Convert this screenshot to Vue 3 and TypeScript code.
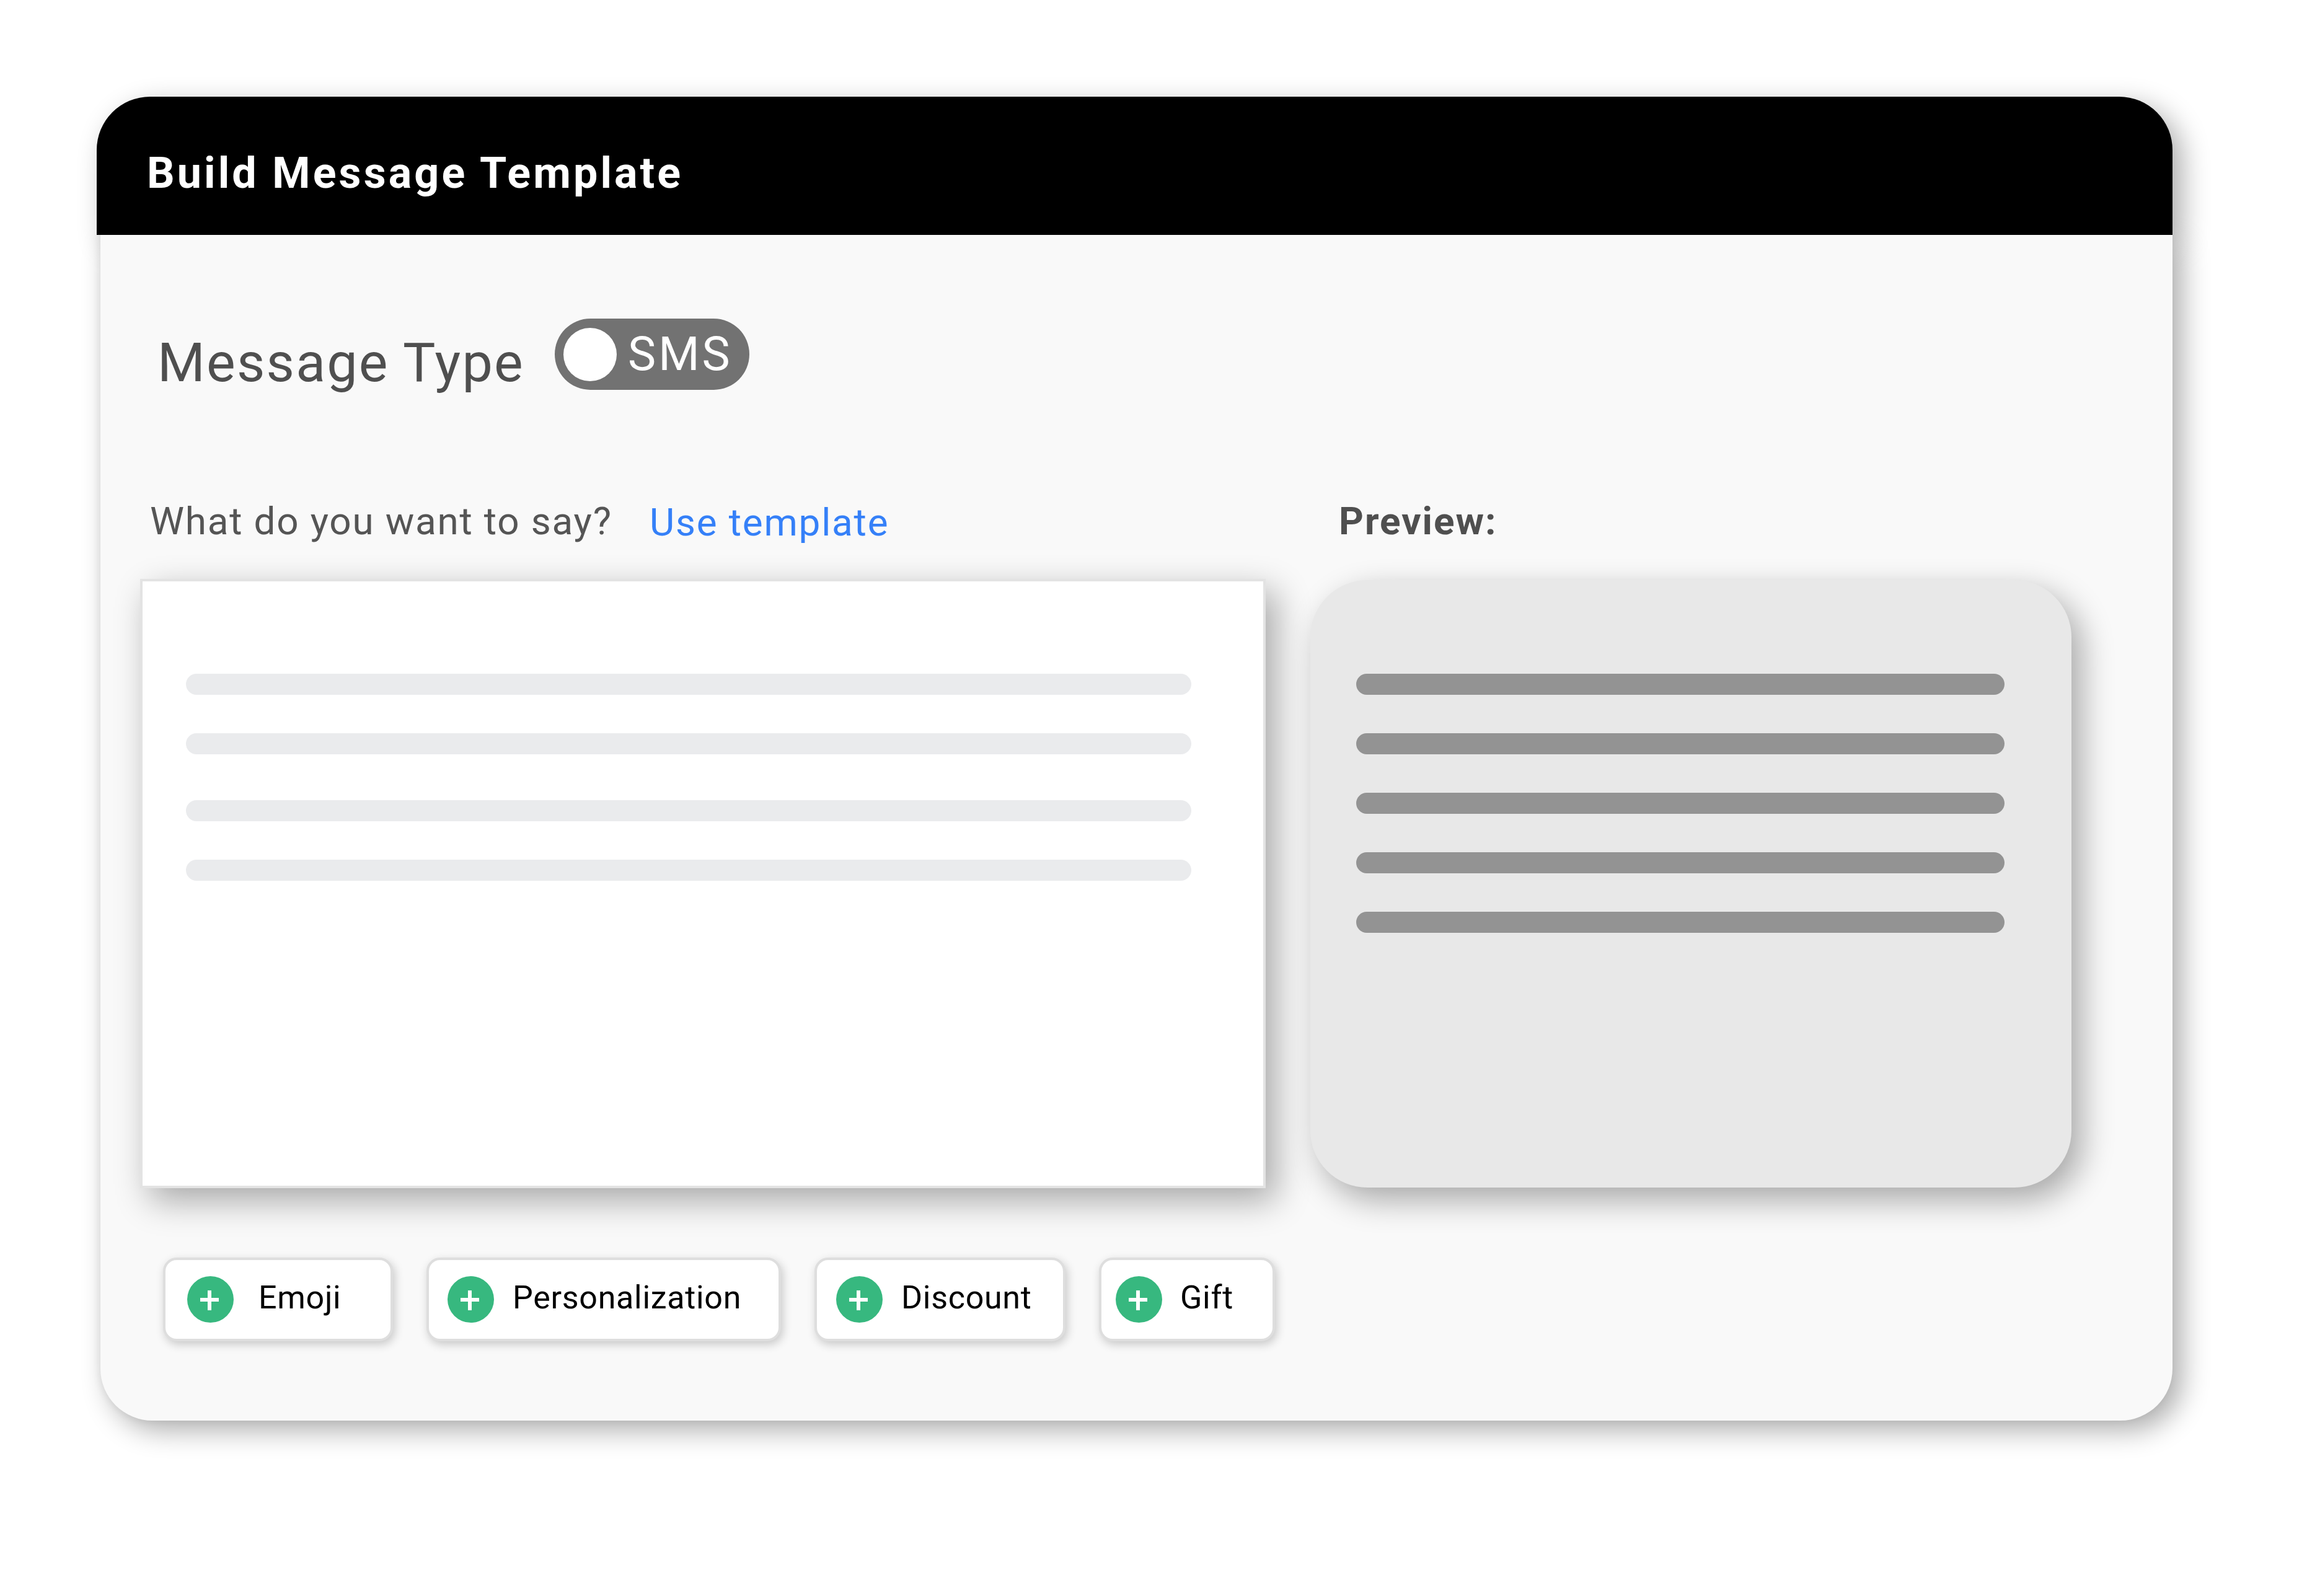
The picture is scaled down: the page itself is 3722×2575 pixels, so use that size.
<script setup lang="ts">
interface Chip { label: string; kind: string }
const chips: Chip[] = [
  { label: 'Emoji', kind: 'emoji' },
  { label: 'Personalization', kind: 'personal' },
  { label: 'Discount', kind: 'discount' },
  { label: 'Gift', kind: 'gift' },
]
const editorLines = [1, 2, 3, 4]
const previewLines = [1, 2, 3, 4, 5]
</script>

<template>
  <div class="page">
    <div class="card">
      <header class="header">
        <h1 class="title">Build Message Template</h1>
      </header>
      <main class="body">
        <div class="type-row">
          <span class="type-label">Message Type</span>
          <div class="toggle">
            <span class="knob"></span>
            <span class="toggle-text">SMS</span>
          </div>
        </div>
        <div class="head-row">
          <span class="ask">What do you want to say?</span>
          <a class="use">Use template</a>
          <span class="preview-title">Preview:</span>
        </div>
        <div class="panels">
          <div class="editor">
            <span v-for="n in editorLines" :key="n" class="bar bar-light"></span>
          </div>
          <div class="preview">
            <span v-for="n in previewLines" :key="n" class="bar bar-dark"></span>
          </div>
        </div>
        <div class="chips">
          <button v-for="c in chips" :key="c.label" class="chip" :class="'chip-' + c.kind">
            <svg class="plus" viewBox="0 0 75 75" width="75" height="75" aria-hidden="true">
              <circle cx="37.5" cy="37.5" r="37.5" fill="#37b87f" />
              <rect x="21" y="35" width="30" height="6" fill="#fff" />
              <rect x="33" y="23" width="6" height="32" fill="#fff" />
            </svg>
            <span class="chip-text">{{ c.label }}</span>
          </button>
        </div>
      </main>
    </div>
  </div>
</template>

<style>
html, body { margin: 0; background: #fff; }
</style>

<style scoped>
.page {
  width: 3722px;
  height: 2575px;
  box-sizing: border-box;
  padding: 156px 0 0 156px;
  background: #fff;
  font-family: Roboto, "Liberation Sans", sans-serif;
  overflow: hidden;
}
.card { width: 3349px; }
.header {
  height: 223px;
  box-sizing: border-box;
  padding: 22px 0 0 81px;
  display: flex;
  align-items: center;
  background: #000;
  border-radius: 86px 86px 0 0;
  box-shadow: 15px 15px 45px rgba(0, 0, 0, 0.33);
}
.title {
  margin: 0;
  color: #fff;
  font-size: 70px;
  font-weight: 700;
  letter-spacing: 4.1px;
  line-height: 80px;
}
.body {
  position: relative;
  margin-left: 6px;
  height: 1913px;
  background: #f9f9f9;
  border-radius: 0 0 84px 84px;
  box-shadow: 15px 15px 45px rgba(0, 0, 0, 0.33), -4px 0 12px rgba(0, 0, 0, 0.05);
  display: flex;
  flex-direction: column;
}
.type-row {
  margin: 135px 0 0 92px;
  height: 115px;
  display: flex;
  align-items: flex-start;
}
.type-label {
  width: 586px;
  margin-top: 21px;
  line-height: 100px;
  color: #4f4f4f;
  font-size: 88px;
  font-weight: 400;
  letter-spacing: 2.2px;
  white-space: nowrap;
}
.toggle {
  margin-left: 55px;
  width: 314px;
  height: 115px;
  box-sizing: border-box;
  padding-left: 14px;
  display: flex;
  align-items: center;
  background: #727272;
  border-radius: 58px;
}
.knob {
  width: 86px;
  height: 86px;
  border-radius: 50%;
  background: #fff;
}
.toggle-text {
  margin: -2px 0 0 18px;
  color: #fff;
  font-size: 76px;
  font-weight: 400;
  letter-spacing: 4px;
  line-height: 90px;
}
.head-row {
  margin: 172px 0 0 80px;
  height: 80px;
  display: flex;
  align-items: flex-start;
  line-height: 80px;
  font-size: 62px;
  letter-spacing: 1.8px;
}
.ask { color: #555; width: 806px; white-space: nowrap; }
.use { color: #3580f8; width: 1112px; margin-top: 2px; white-space: nowrap; }
.preview-title { color: #4f4f4f; font-weight: 700; letter-spacing: 2px; }
.panels {
  margin: 53px 0 0 64px;
  display: flex;
  align-items: flex-start;
  gap: 72px;
}
.editor {
  width: 1816px;
  height: 983px;
  box-sizing: border-box;
  padding: 149px 0 0 70px;
  background: #fff;
  border: 4px solid #e3e3e3;
  display: flex;
  flex-direction: column;
  gap: 62px;
  box-shadow: 16px 20px 52px rgba(0, 0, 0, 0.33);
}
.editor .bar:nth-child(3) { margin-top: 12px; }
.preview {
  margin-top: 2px;
  width: 1228px;
  height: 980px;
  box-sizing: border-box;
  padding: 151px 0 0 74px;
  background: #e8e8e8;
  border-radius: 92px;
  display: flex;
  flex-direction: column;
  gap: 62px;
  box-shadow: 16px 20px 52px rgba(0, 0, 0, 0.33);
}
.bar {
  display: block;
  height: 34px;
  border-radius: 17px;
}
.bar-light { width: 1622px; background: #eaebed; }
.bar-dark { width: 1046px; background: #939393; }
.chips {
  margin: 112px 0 0 101px;
  display: flex;
  align-items: flex-start;
  gap: 54px;
}
.chip {
  height: 135px;
  box-sizing: border-box;
  margin: 0;
  padding: 0;
  display: flex;
  align-items: center;
  background: #fff;
  border: 4px solid #dedede;
  border-radius: 22px;
  box-shadow: 3px 5px 15px rgba(0, 0, 0, 0.2);
  font-family: inherit;
}
.plus { flex: none; display: block; }
.chip-text {
  margin-bottom: 6px;
  color: #000;
  font-size: 52px;
  line-height: 60px;
  letter-spacing: 0.7px;
  white-space: nowrap;
}
.chip-emoji { width: 371px; padding-left: 35px; }
.chip-emoji .chip-text { margin-left: 40px; }
.chip-personal { width: 572px; padding-left: 30px; }
.chip-personal .chip-text { margin-left: 30px; }
.chip-discount { width: 405px; padding-left: 31px; }
.chip-discount .chip-text { margin-left: 30px; }
.chip-gift { width: 284px; padding-left: 23px; }
.chip-gift .chip-text { margin-left: 29px; }
</style>
